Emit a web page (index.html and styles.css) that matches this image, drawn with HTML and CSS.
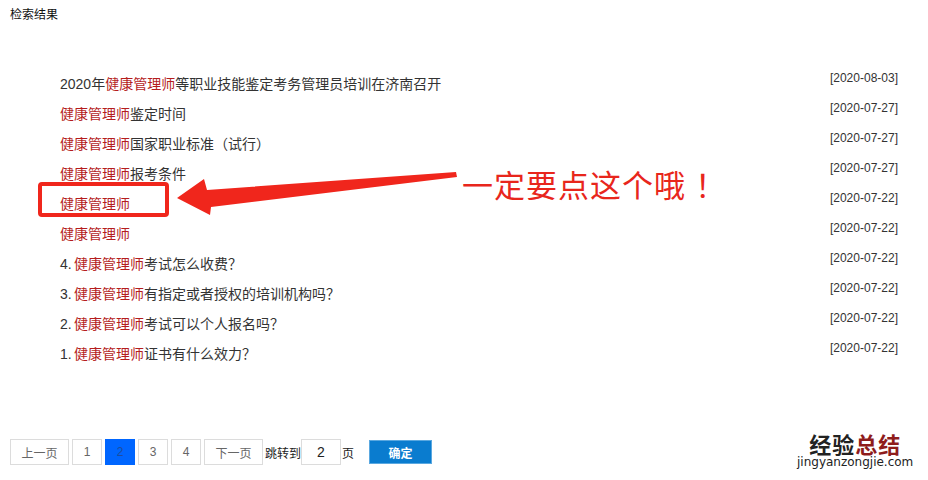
FILE: index.html
```html
<!DOCTYPE html>
<html lang="zh-CN">
<head>
<meta charset="utf-8">
<title>检索结果</title>
<link rel="stylesheet" href="styles.css">
</head>
<body>
<div class="page">
  <div class="header">检索结果</div>
  <ul class="results">
    <li class="row"><span class="title">2020年<em>健康管理师</em>等职业技能鉴定考务管理员培训在济南召开</span><span class="date">[2020-08-03]</span></li>
    <li class="row"><span class="title"><em>健康管理师</em>鉴定时间</span><span class="date">[2020-07-27]</span></li>
    <li class="row"><span class="title"><em>健康管理师</em>国家职业标准（试行）</span><span class="date">[2020-07-27]</span></li>
    <li class="row"><span class="title"><em>健康管理师</em>报考条件</span><span class="date">[2020-07-27]</span></li>
    <li class="row"><span class="title"><em>健康管理师</em></span><span class="date">[2020-07-22]</span></li>
    <li class="row"><span class="title"><em>健康管理师</em></span><span class="date">[2020-07-22]</span></li>
    <li class="row"><span class="title"><span class="num">4.</span><em>健康管理师</em>考试怎么收费？</span><span class="date">[2020-07-22]</span></li>
    <li class="row"><span class="title"><span class="num">3.</span><em>健康管理师</em>有指定或者授权的培训机构吗？</span><span class="date">[2020-07-22]</span></li>
    <li class="row"><span class="title"><span class="num">2.</span><em>健康管理师</em>考试可以个人报名吗？</span><span class="date">[2020-07-22]</span></li>
    <li class="row"><span class="title"><span class="num">1.</span><em>健康管理师</em>证书有什么效力？</span><span class="date">[2020-07-22]</span></li>
  </ul>
  <div class="pager">
    <span class="pg pg-wide">上一页</span>
    <span class="pg">1</span>
    <span class="pg pg-active">2</span>
    <span class="pg">3</span>
    <span class="pg">4</span>
    <span class="pg pg-wide">下一页</span>
    <span class="jump">跳转到</span>
    <span class="jump-input">2</span>
    <span class="jump jump-page">页</span>
    <span class="ok">确定</span>
  </div>

  <div class="mark-box"></div>
  <svg class="arrow" width="300" height="60" viewBox="170 165 300 60">
    <polygon fill="#f0261c" points="177,198 204,179 207,190 456,172 457,177 211,207 210,215"/>
  </svg>
  <div class="note">一定要点这个哦<span class="bang">！</span></div>

  <div class="logo">
    <div class="logo-cn"><span class="logo-dark">经验</span><span class="logo-red">总结</span></div>
    <div class="logo-en">jingyanzongjie.com</div>
  </div>
</div>
</body>
</html>
```

FILE: styles.css
```css
* { box-sizing: border-box; }
html, body {
  margin: 0;
  padding: 0;
  background: #fff;
}
body {
  font-family: "Liberation Sans", "Noto Sans CJK SC", sans-serif;
  color: #333;
}
.page {
  position: relative;
  width: 928px;
  height: 480px;
  overflow: hidden;
}
.header {
  height: 30px;
  line-height: 30px;
  padding-left: 10px;
  font-size: 12px;
  color: #111;
}
.results {
  list-style: none;
  margin: 39px 0 0 0;
  padding: 0 30px 0 60px;
}
.row {
  display: flex;
  justify-content: space-between;
  align-items: flex-start;
  height: 30px;
}
.title {
  font-size: 14px;
  line-height: 30px;
  color: #333;
}
.num {
  display: inline-block;
  width: 14px;
}
.title em {
  font-style: normal;
  color: #b51d1d;
}
.date {
  font-size: 12px;
  line-height: 18px;
  color: #333;
}
.pager {
  display: flex;
  align-items: center;
  margin: 70px 0 0 10px;
  height: 26px;
}
.pg {
  display: flex;
  align-items: center;
  justify-content: center;
  width: 30px;
  height: 26px;
  margin-right: 3px;
  border: 1px solid #dcdcdc;
  font-size: 12px;
  color: #666;
  background: #fff;
}
.pg-wide { width: 59px; }
.pg-active {
  background: #0066ff;
  border-color: #0066ff;
  color: #1d4d9e;
}
.jump {
  font-size: 12px;
  color: #222;
  margin-left: -1px;
}
.jump-page {
  margin-left: 1px;
}
.jump-input {
  display: flex;
  align-items: center;
  justify-content: center;
  width: 40px;
  height: 26px;
  border: 1px solid #dcdcdc;
  font-size: 14px;
  color: #222;
}
.ok {
  display: flex;
  align-items: center;
  justify-content: center;
  width: 63px;
  height: 24px;
  margin-left: 15px;
  background: #0a7ccf;
  border: 1px solid #5aa8e0;
  color: #fff;
  font-size: 12px;
  font-weight: bold;
}
.mark-box {
  position: absolute;
  left: 38px;
  top: 182px;
  width: 131px;
  height: 35px;
  border: 4px solid #f0261c;
  border-radius: 4px;
}
.arrow {
  position: absolute;
  left: 170px;
  top: 165px;
}
.note {
  position: absolute;
  left: 462px;
  top: 167px;
  font-family: "Noto Sans CJK SC", sans-serif;
  font-size: 31px;
  line-height: 34px;
  letter-spacing: 1px;
  color: #e8261c;
}
.bang {
  padding-left: 9px;
}
.logo {
  position: absolute;
  left: 797px;
  top: 431px;
  text-align: center;
}
.logo-cn {
  font-family: "Noto Sans CJK SC", sans-serif;
  font-weight: bold;
  font-size: 22px;
  line-height: 24px;
  letter-spacing: 1px;
}
.logo-dark { color: #222; }
.logo-red { color: #8e1c1c; }
.logo-en {
  font-family: "DejaVu Sans", sans-serif;
  font-size: 12px;
  line-height: 14px;
  color: #222;
}
```
